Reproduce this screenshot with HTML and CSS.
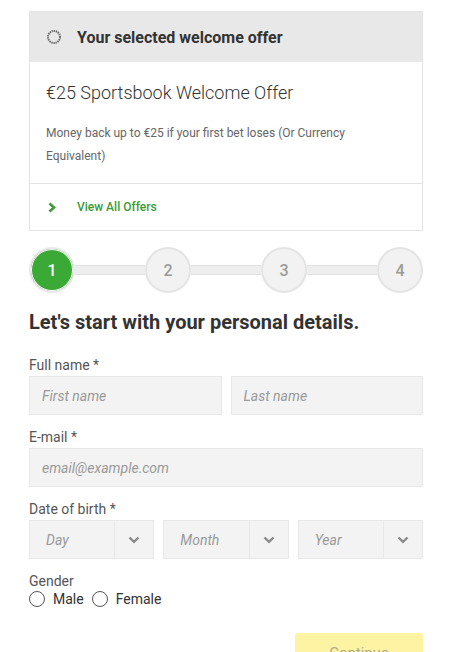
FILE: index.html
```html
<!DOCTYPE html>
<html lang="en">
<head>
  <meta charset="UTF-8">
  <meta name="viewport" content="width=device-width, initial-scale=1.0">
  <title>Registration</title>
  <link rel="stylesheet" href="styles.css">
</head>
<body>
  <div class="page">
    <div class="offer-card">
      <div class="offer-head">
        <svg class="offer-radio" width="16" height="16" viewBox="0 0 16 16"><circle cx="8" cy="8" r="6" fill="none" stroke="#6a6a6a" stroke-width="2" stroke-dasharray="1.4 0.7"/></svg>
        <span class="offer-head-title">Your selected welcome offer</span>
      </div>
      <div class="offer-body">
        <div class="offer-title">€25 Sportsbook Welcome Offer</div>
        <p class="offer-text">Money back up to €25 if your first bet loses (Or Currency Equivalent)</p>
      </div>
      <a class="offer-link" href="#">
        <svg class="chev-right" width="9" height="11" viewBox="0 0 9 11"><path d="M1.5 1.5 L6 5.5 L1.5 9.5" fill="none" stroke="#3a9d35" stroke-width="2.6"/></svg>
        <span>View All Offers</span>
      </a>
    </div>

    <div class="steps">
      <div class="step active">1</div>
      <div class="step-line"></div>
      <div class="step">2</div>
      <div class="step-line"></div>
      <div class="step">3</div>
      <div class="step-line"></div>
      <div class="step">4</div>
    </div>

    <h2 class="form-title">Let's start with your personal details.</h2>

    <div class="field">
      <label class="field-label">Full name *</label>
      <div class="row two">
        <input class="input" type="text" placeholder="First name">
        <input class="input" type="text" placeholder="Last name">
      </div>
    </div>

    <div class="field">
      <label class="field-label">E-mail *</label>
      <input class="input" type="text" placeholder="email@example.com">
    </div>

    <div class="field">
      <label class="field-label">Date of birth *</label>
      <div class="row three">
        <div class="select"><span class="select-text">Day</span><span class="select-arrow"><svg width="12" height="8" viewBox="0 0 12 8"><path d="M1.5 1.5 L6 5.8 L10.5 1.5" fill="none" stroke="#8a8a8a" stroke-width="2.4"/></svg></span></div>
        <div class="select"><span class="select-text">Month</span><span class="select-arrow"><svg width="12" height="8" viewBox="0 0 12 8"><path d="M1.5 1.5 L6 5.8 L10.5 1.5" fill="none" stroke="#8a8a8a" stroke-width="2.4"/></svg></span></div>
        <div class="select"><span class="select-text">Year</span><span class="select-arrow"><svg width="12" height="8" viewBox="0 0 12 8"><path d="M1.5 1.5 L6 5.8 L10.5 1.5" fill="none" stroke="#8a8a8a" stroke-width="2.4"/></svg></span></div>
      </div>
    </div>

    <div class="field gender">
      <label class="field-label">Gender</label>
      <div class="radios">
        <label class="radio"><span class="radio-dot"></span>Male</label>
        <label class="radio"><span class="radio-dot"></span>Female</label>
      </div>
    </div>

    <div class="actions">
      <button class="btn-continue">Continue</button>
    </div>
  </div>
</body>
</html>
```

FILE: styles.css
```css
body {
  margin: 0;
  font-family: Roboto, "Liberation Sans", Arial, sans-serif;
  background-color: #fff;
  color: #333;
}

.page {
  width: 394px;
  margin: 0 auto;
  padding-top: 11px;
  padding-left: 2px;
}

.offer-card {
  border: 1px solid #e3e3e3;
  background: #fff;
}

.offer-head {
  display: flex;
  align-items: center;
  height: 50px;
  background-color: #e8e8e8;
  padding-left: 16px;
}

.offer-radio {
  margin-right: 15px;
}

.offer-head-title {
  font-size: 16px;
  font-weight: 700;
  color: #333;
}

.offer-body {
  padding: 20px 16px 15px;
  border-bottom: 1px solid #e3e3e3;
}

.offer-title {
  font-size: 18px;
  font-weight: 300;
  color: #333;
}

.offer-text {
  margin: 19px 0 0;
  font-size: 12px;
  line-height: 23px;
  color: #666;
}

.offer-link {
  display: flex;
  align-items: center;
  height: 46px;
  padding-left: 18px;
  font-size: 12px;
  font-weight: 500;
  color: #3a9d35;
  text-decoration: none;
}

.chev-right {
  margin-right: 20px;
}

.steps {
  display: flex;
  align-items: center;
  margin-top: 16px;
}

.step {
  width: 42px;
  height: 42px;
  border: 2px solid #e4e4e4;
  border-radius: 50%;
  background-color: #f2f2f2;
  color: #9a9a9a;
  font-size: 16px;
  font-weight: 500;
  display: flex;
  align-items: center;
  justify-content: center;
  flex-shrink: 0;
}

.step.active {
  background-color: #3aa935;
  border-color: #e8e8e8;
  color: #fff;
  box-shadow: inset 0 0 0 1px #fff;
}

.step-line {
  flex: 1;
  height: 8px;
  background-color: #eee;
  border-top: 1px solid #e2e2e2;
  border-bottom: 1px solid #e2e2e2;
}

.form-title {
  margin: 17px 0 23px;
  font-size: 20px;
  font-weight: 700;
  color: #333;
}

.field {
  margin-bottom: 14px;
}

.field-label {
  display: block;
  font-size: 14px;
  color: #555;
  margin-bottom: 3px;
}

.row {
  display: grid;
  gap: 9px;
}

.row.two {
  grid-template-columns: 1fr 1fr;
}

.row.three {
  grid-template-columns: 1fr 1fr 1fr;
}

.input {
  display: block;
  width: 100%;
  box-sizing: border-box;
  height: 39px;
  border: 1px solid #e8e8e8;
  background-color: #f3f3f3;
  padding: 0 12px;
  font-family: inherit;
  font-size: 14px;
  color: #333;
}

.input::placeholder {
  color: #999;
  font-style: italic;
}

.select {
  display: flex;
  height: 39px;
  box-sizing: border-box;
  border: 1px solid #e8e8e8;
  background-color: #f3f3f3;
}

.select-text {
  flex: 1;
  display: flex;
  align-items: center;
  padding-left: 16px;
  font-size: 14px;
  font-style: italic;
  color: #999;
}

.select-arrow {
  width: 38px;
  border-left: 1px solid #e8e8e8;
  display: flex;
  align-items: center;
  justify-content: center;
}

.gender .field-label {
  margin-bottom: 2px;
}

.radios {
  display: flex;
  gap: 8px;
}

.radio {
  display: flex;
  align-items: center;
  font-size: 14px;
  color: #333;
}

.radio-dot {
  width: 14px;
  height: 14px;
  border: 1px solid #555;
  border-radius: 50%;
  margin-right: 8px;
}

.actions {
  display: flex;
  justify-content: flex-end;
  margin-top: 26px;
}

.btn-continue {
  width: 128px;
  height: 40px;
  border: none;
  border-radius: 3px;
  background-color: #fdf3a2;
  color: #b0ab8a;
  font-family: inherit;
  font-size: 15px;
  padding: 0;
}
```
